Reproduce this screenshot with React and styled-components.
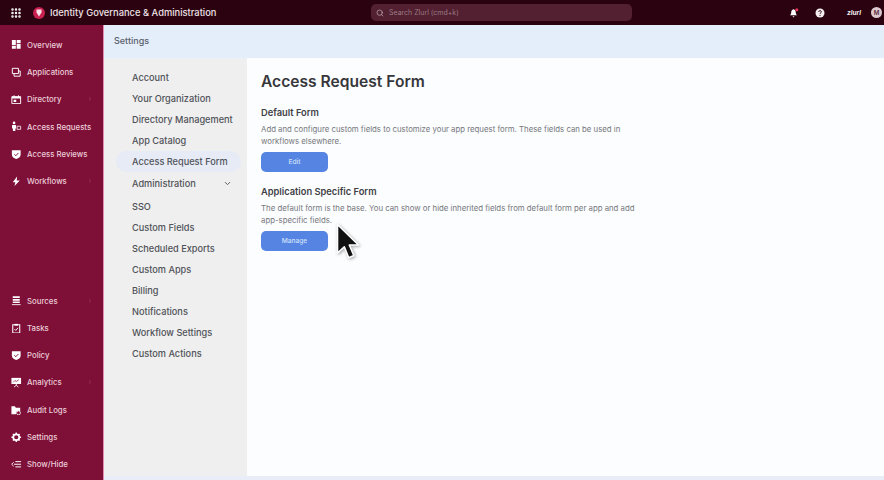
import React from "react";
import styled, { createGlobalStyle } from "styled-components";
import { ChevronRight, ChevronDown, Search, Grip } from "lucide-react";

const Global = createGlobalStyle`
  html, body { margin: 0; padding: 0; }
  body { font-family: "Inter", "Liberation Sans", sans-serif; background: #e8effa; }
`;

const Page = styled.div`
  position: relative;
  width: 884px;
  height: 480px;
  overflow: hidden;
  display: flex;
  flex-direction: column;
`;

const TopBar = styled.header`
  height: 25px;
  flex: none;
  background: #2b0210;
  display: flex;
  align-items: center;
  padding: 0 0 0 10px;
  color: #efe3e7;
`;

const Brand = styled.div`
  display: flex;
  align-items: center;
  width: 361px;
  flex: none;
`;

const BrandMark = styled.span`
  width: 12px;
  height: 12px;
  border-radius: 50%;
  margin-left: 11px;
  margin-right: 5px;
  background: #c8204f;
  display: flex;
  align-items: center;
  justify-content: center;
`;

const BrandName = styled.span`
  font-size: 9.35px;
  font-weight: 500;
  white-space: nowrap;
`;

const SearchBox = styled.div`
  width: 261px;
  height: 17px;
  flex: none;
  border-radius: 5px;
  background: #522030;
  display: flex;
  align-items: center;
  gap: 5px;
  padding-left: 5px;
  box-sizing: border-box;
  font-size: 7px;
  color: #9c7b86;
`;

const TopActions = styled.div`
  margin-left: auto;
  display: flex;
  align-items: center;
  padding-right: 2px;
`;

const BellWrap = styled.span`
  display: flex;
  margin-right: 16px;
`;

const ZlurlMark = styled.span`
  margin-left: 22px;
  width: 24px;
  font-size: 6.5px;
  font-weight: 700;
  font-style: italic;
  color: #f2eef0;
`;

const Avatar = styled.span`
  width: 11px;
  height: 11px;
  border-radius: 50%;
  background: #dcc9cf;
  color: #5a2a3a;
  font-size: 6px;
  font-weight: 600;
  display: flex;
  align-items: center;
  justify-content: center;
`;

const Body = styled.div`
  flex: 1;
  display: flex;
  min-height: 0;
`;

const Sidebar = styled.nav`
  width: 103px;
  flex: none;
  background: #7e0f37;
  border-right: 1px solid #e58ab0;
  display: flex;
  flex-direction: column;
  justify-content: space-between;
  padding: 6px 0 2px;
`;

const NavGroup = styled.div`
  display: flex;
  flex-direction: column;
`;

const NavRow = styled.div`
  height: 27.3px;
  display: flex;
  align-items: center;
  padding-left: 11px;
  color: #eccdd8;
  font-size: 7.8px;
  font-weight: 500;
  gap: 5.5px;
  white-space: nowrap;
  position: relative;
`;

const NavIcon = styled.svg`
  width: 10.5px;
  height: 10.5px;
  flex: none;
  color: #fff;
`;

const Caret = styled.span`
  position: absolute;
  left: 87px;
  display: flex;
  color: #a85474;
`;

const Main = styled.main`
  flex: 1;
  display: flex;
  flex-direction: column;
  background: linear-gradient(180deg, #e4eefa 0%, #e8edf8 100%);
  min-width: 0;
  padding-bottom: 4px;
`;

const Crumb = styled.div`
  height: 33px;
  flex: none;
  display: flex;
  align-items: center;
  padding: 0 0 3px 10px;
  box-sizing: border-box;
  font-size: 9px;
  font-weight: 500;
  color: #59606b;
`;

const Split = styled.div`
  flex: 1;
  display: flex;
  min-height: 0;
`;

const Menu = styled.div`
  width: 143px;
  flex: none;
  background: #efefef;
  padding: 8px 0 0 12px;
  box-sizing: border-box;
  border-top: 1px solid #edf0f4;
`;

const MenuItem = styled.div`
  height: 21.1px;
  width: 125px;
  margin-top: ${(p) => (p.$gap ? "2px" : "0")};
  display: flex;
  align-items: center;
  justify-content: space-between;
  padding: 0 9px 0 16px;
  box-sizing: border-box;
  border-radius: 10px;
  font-size: 9.2px;
  font-weight: 500;
  color: #505258;
  white-space: nowrap;
  background: ${(p) => (p.$active ? "#e6ebf6" : "transparent")};
`;

const Content = styled.section`
  flex: 1;
  background: #fbfdff;
  padding: 14px 0 0 14px;
  color: #3a3a3e;
`;

const Title = styled.h1`
  margin: 0 0 15px;
  font-size: 15.6px;
  line-height: 20px;
  font-weight: 600;
  color: #37373b;
`;

const SectionTitle = styled.h2`
  margin: 0 0 5px;
  font-size: 9.3px;
  line-height: 12px;
  font-weight: 600;
  color: #3f3f44;
`;

const Copy = styled.p`
  margin: 0 0 4.5px;
  width: 385px;
  font-size: 7.8px;
  line-height: 11.6px;
  color: #77777c;
`;

const Action = styled.button`
  display: block;
  width: 67px;
  height: 20px;
  border: 0;
  border-radius: 5px;
  background: #5584e2;
  color: #cfe0fb;
  font-family: inherit;
  font-size: 6.6px;
  font-weight: 500;
  margin-bottom: 14.5px;
  padding: 0;
`;

const Cursor = styled.svg`
  position: absolute;
  left: 334px;
  top: 222px;
  filter: drop-shadow(1px 1px 1.5px rgba(0, 0, 0, 0.35));
`;

// filled glyphs, the icon packages only have outline versions of these
const glyphs = {
  overview: <path d="M1 1h4.5v6H1zM6.5 1H11v3.5H6.5zM6.5 5.5H11V11H6.5zM1 8h4.5v3H1z" fill="currentColor" />,
  apps: <path d="M1.5 1.5h7v6h-7zM3.5 7.5v3h7v-6h-2" fill="none" stroke="currentColor" strokeWidth="1.1" />,
  directory: (
    <g>
      <path d="M1 3h10v8H1z" fill="none" stroke="currentColor" strokeWidth="1.1" />
      <path d="M1 3h10v2H1zM3 1.5h1v2H3zM8 1.5h1v2H8zM3 6.5h3v2.5H3z" fill="currentColor" />
    </g>
  ),
  requests: (
    <g>
      <circle cx="3.5" cy="2.2" r="1.5" fill="currentColor" />
      <path d="M1.2 4.5h4.6v4H5v3H2.2v-3h-1z" fill="currentColor" />
      <path d="M7 6h4v3.5H7z" fill="none" stroke="currentColor" strokeWidth="0.9" />
    </g>
  ),
  shield: (
    <g>
      <path d="M1 1.5h10v5C11 9 8.5 10.5 6 11.5 3.5 10.5 1 9 1 6.5z" fill="currentColor" />
      <path d="M3.8 6l1.7 1.7 3-3.2" fill="none" stroke="#7e0f37" strokeWidth="1.1" />
    </g>
  ),
  bolt: <path d="M7 0.5L2 7h3l-1 4.5L10 5H6.5z" fill="currentColor" />,
  sources: (
    <g>
      <path d="M2 1.5h8v2H2zM2 4.5h8v2H2zM2 7.5h8v1.5H2z" fill="currentColor" />
      <path d="M1 11h10" stroke="currentColor" strokeWidth="1" />
    </g>
  ),
  tasks: (
    <g>
      <path d="M2 2h8v9.5H2z" fill="none" stroke="currentColor" strokeWidth="1.2" />
      <path d="M4 1h4v2H4z" fill="currentColor" />
      <path d="M4 7l1.5 1.5L8 5.5" fill="none" stroke="currentColor" strokeWidth="1.1" />
    </g>
  ),
  analytics: (
    <g>
      <path d="M0.5 1h11v7h-11z" fill="currentColor" />
      <path d="M2.5 6l2-2 1.5 1.2L9 3" fill="none" stroke="#7e0f37" strokeWidth="0.8" />
      <path d="M6 8v1.5M6 9.5L3.5 11.5M6 9.5l2.5 2" stroke="currentColor" strokeWidth="1" />
    </g>
  ),
  audit: (
    <g>
      <path d="M0.5 1.5h4l1 1.5h5V7L8 6.5 6 8l-.5 2.5h-5z" fill="currentColor" />
      <circle cx="8.6" cy="9" r="2.2" fill="none" stroke="currentColor" strokeWidth="0.9" />
    </g>
  ),
  settings: (
    <g>
      <circle cx="6" cy="6" r="3.4" fill="none" stroke="currentColor" strokeWidth="2" />
      <path d="M6 0.5v2M6 9.5v2M0.5 6h2M9.5 6h2M2.2 2.2l1.4 1.4M8.4 8.4l1.4 1.4M9.8 2.2L8.4 3.6M3.6 8.4L2.2 9.8" stroke="currentColor" strokeWidth="1.6" />
    </g>
  ),
  hide: <path d="M3.5 6H11.5M5 3h6.5M5 9h6.5M3 3.8L0.8 6 3 8.2" fill="none" stroke="currentColor" strokeWidth="1.1" />,
};

const topNav = [
  ["Overview", "overview"],
  ["Applications", "apps"],
  ["Directory", "directory", true],
  ["Access Requests", "requests"],
  ["Access Reviews", "shield"],
  ["Workflows", "bolt", true],
];

const bottomNav = [
  ["Sources", "sources", true],
  ["Tasks", "tasks"],
  ["Policy", "shield"],
  ["Analytics", "analytics", true],
  ["Audit Logs", "audit"],
  ["Settings", "settings"],
  ["Show/Hide", "hide"],
];

const menu = [
  "Account", "Your Organization", "Directory Management", "App Catalog",
  "Access Request Form", "Administration", "SSO", "Custom Fields",
  "Scheduled Exports", "Custom Apps", "Billing", "Notifications",
  "Workflow Settings", "Custom Actions",
];

function NavItem({ label, glyph, more }) {
  return (
    <NavRow>
      <NavIcon viewBox="0 0 12 12">{glyphs[glyph]}</NavIcon>
      {label}
      {more && <Caret><ChevronRight size={6} /></Caret>}
    </NavRow>
  );
}

export default function App() {
  return (
    <Page>
      <Global />
      <TopBar>
        <Brand>
          <Grip size={12} strokeWidth={3} color="#fff" />
          <BrandMark>
            <svg width="6" height="8" viewBox="0 0 6 8">
              <path d="M0.5 0.5h5v3L3 7.5 0.5 3.5z" fill="#fbe3ea" />
            </svg>
          </BrandMark>
          <BrandName>Identity Governance &amp; Administration</BrandName>
        </Brand>
        <SearchBox>
          <Search size={8} color="#c9b4bb" />
          Search Zlurl (cmd+k)
        </SearchBox>
        <TopActions>
          <BellWrap>
            <svg width="10" height="10" viewBox="0 0 10 10">
              <path d="M4.5 1.2C2.8 1.5 2.2 3 2.2 4.5c0 1.2-.5 2-1.2 2.8h7c-.7-.8-1.2-1.6-1.2-2.8 0-1.5-.6-3-2.3-3.3z" fill="#fff" />
              <path d="M3.5 8.2h2L4.5 9.4z" fill="#fff" />
              <circle cx="7.8" cy="1.8" r="1.5" fill="#e8365f" />
            </svg>
          </BellWrap>
          <svg width="10" height="10" viewBox="0 0 10 10">
            <circle cx="5" cy="5" r="4.5" fill="#f4eef0" />
            <path d="M3.6 3.9C3.7 3 4.3 2.6 5 2.6c.8 0 1.4.5 1.4 1.2 0 1-1.4 1-1.4 2.1" fill="none" stroke="#2b0210" strokeWidth="0.9" />
            <circle cx="5" cy="7.3" r="0.6" fill="#2b0210" />
          </svg>
          <ZlurlMark>zlurl</ZlurlMark>
          <Avatar>M</Avatar>
        </TopActions>
      </TopBar>
      <Body>
        <Sidebar>
          <NavGroup>
            {topNav.map(([label, glyph, more]) => (
              <NavItem key={label} label={label} glyph={glyph} more={more} />
            ))}
          </NavGroup>
          <NavGroup>
            {bottomNav.map(([label, glyph, more]) => (
              <NavItem key={label} label={label} glyph={glyph} more={more} />
            ))}
          </NavGroup>
        </Sidebar>
        <Main>
          <Crumb>Settings</Crumb>
          <Split>
            <Menu>
              {menu.map((item) => (
                <MenuItem key={item} $active={item === "Access Request Form"} $gap={item === "SSO"}>
                  {item}
                  {item === "Administration" && <ChevronDown size={9} strokeWidth={2.4} />}
                </MenuItem>
              ))}
            </Menu>
            <Content>
              <Title>Access Request Form</Title>
              <SectionTitle>Default Form</SectionTitle>
              <Copy>
                Add and configure custom fields to customize your app request form. These fields can be used in workflows elsewhere.
              </Copy>
              <Action>Edit</Action>
              <SectionTitle>Application Specific Form</SectionTitle>
              <Copy>
                The default form is the base. You can show or hide inherited fields from default form per app and add app-specific fields.
              </Copy>
              <Action>Manage</Action>
            </Content>
          </Split>
        </Main>
      </Body>
      <Cursor width="26" height="40" viewBox="0 0 26 40">
        <path d="M3.5 2.5V31l6.8-6.2 4.4 11 5.2-2.2-4.6-10.6h9.2z" fill="#111" stroke="#fff" strokeWidth="1.6" strokeLinejoin="round" />
      </Cursor>
    </Page>
  );
}
